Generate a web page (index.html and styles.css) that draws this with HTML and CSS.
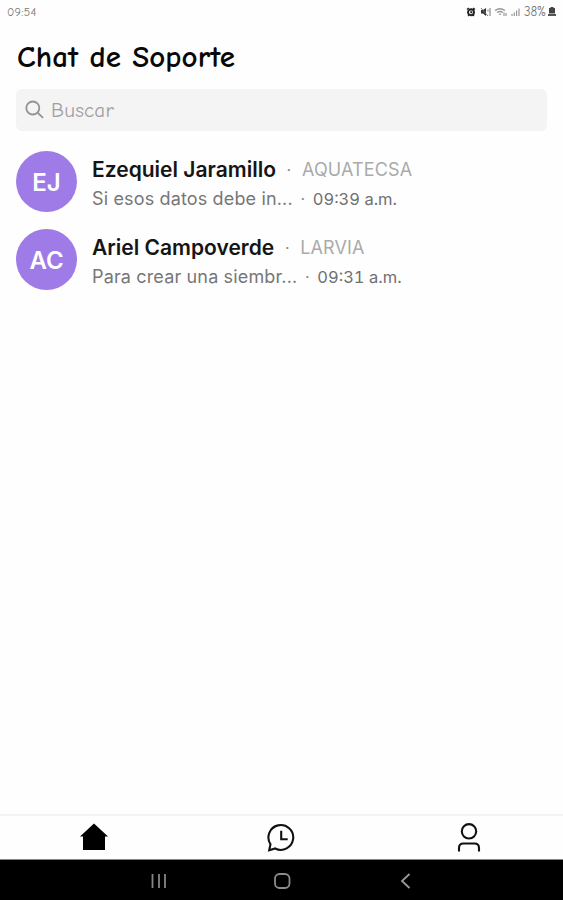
FILE: index.html
```html
<!DOCTYPE html>
<html lang="es">
<head>
    <meta charset="UTF-8">
    <meta name="viewport" content="width=device-width, initial-scale=1.0">
    <title>Chat de Soporte</title>
    <link rel="stylesheet" href="styles.css">
</head>
<body>

<!-- Barra de estado -->
<div class="status-bar">
    <span class="clock">09:54</span>
    <div class="status-icons">
        <svg width="10" height="10" viewBox="0 0 10 10"><circle cx="5" cy="5.2" r="3" fill="none" stroke="#222" stroke-width="1.9"/><path d="M1 2.4L2.8 1M9 2.4L7.2 1M2 9l1-1M8 9L7 8M5 3.5v2h1.3" stroke="#222" stroke-width="1.3" fill="none"/></svg>
        <svg class="mute" width="11" height="10" viewBox="0 0 11 10"><path d="M1 3h2L6 1v8L3 6.5H1z" fill="#333"/><path d="M1 1l7 8M8 2.5v2M10 1v8" stroke="#777" stroke-width="1" fill="none"/></svg>
        <svg class="wifi" width="13" height="10" viewBox="0 0 13 10"><path d="M1 3.5Q6 0 11 3.5M3 5.5q3-2 6 0M5 7.5q1-.8 2 0" stroke="#999" stroke-width="1.4" fill="none"/><path d="M10 5.5v3.5M12 6v3" stroke="#888" stroke-width="1"/></svg>
        <svg class="signal" width="9" height="10" viewBox="0 0 9 10"><path d="M1 7v2M3.3 5.5V9M5.6 3.5V9M8 1.5V9" stroke="#999" stroke-width="1.2"/></svg>
        <span class="percent">38%</span>
        <svg width="8" height="10" viewBox="0 0 8 10"><path d="M2.5 0h3v1H7v5.5H1V1h1.5z" fill="#444"/><path d="M0 7h8v2H0z" fill="#555"/></svg>
    </div>
</div>

<header>
    <h1>Chat de Soporte</h1>
    <div class="search">
        <svg width="20" height="20" viewBox="0 0 20 20" fill="none" stroke="#929292" stroke-width="1.8" stroke-linecap="round"><circle cx="7.8" cy="8" r="6.5"/><path d="M12.6 12.6L17.5 17.3"/></svg>
        <span>Buscar</span>
    </div>
</header>

<!-- Lista de chats -->
<main class="chats">
    <div class="chat">
        <div class="avatar">EJ</div>
        <div class="info">
            <div class="top"><span class="name">Ezequiel Jaramillo</span><span class="dot">·</span><span class="company">AQUATECSA</span></div>
            <div class="bottom"><span class="message">Si esos datos debe in...</span><span class="dot">·</span><span class="time">09:39 a.m.</span></div>
        </div>
    </div>
    <div class="chat">
        <div class="avatar">AC</div>
        <div class="info">
            <div class="top"><span class="name">Ariel Campoverde</span><span class="dot">·</span><span class="company">LARVIA</span></div>
            <div class="bottom"><span class="message">Para crear una siembr...</span><span class="dot">·</span><span class="time">09:31 a.m.</span></div>
        </div>
    </div>
</main>

<!-- Menu inferior -->
<nav class="tabs">
    <svg width="30" height="30" viewBox="0 0 30 30"><path d="M15 .5L29 13.5H26V27H4V13.5H1z" fill="#000"/></svg>
    <svg width="30" height="30" viewBox="0 0 30 30" fill="none" stroke="#111" stroke-width="2.1"><path d="M3.2 27.3L4.5 21.3A12.4 12.4 0 1 1 9.2 25.5Z"/><path d="M15.2 7.8V16.3H21.7"/></svg>
    <svg width="30" height="30" viewBox="0 0 30 30" fill="none" stroke="#111" stroke-width="2.1"><circle cx="15" cy="8.3" r="7.2"/><path d="M5 28.5V25Q5 20.5 9.5 20.5H20.5Q25 20.5 25 25V28.5"/></svg>
</nav>

<!-- Botones del sistema -->
<div class="system-bar">
    <svg width="18" height="18" viewBox="0 0 18 18"><path d="M2.5 2v14M9 2v14M15 2v14" stroke="#858585" stroke-width="1.8"/></svg>
    <svg width="18" height="18" viewBox="0 0 18 18"><rect x="2" y="2" width="14.5" height="14" rx="4.5" fill="none" stroke="#8c8c8c" stroke-width="1.8"/></svg>
    <svg width="18" height="18" viewBox="0 0 18 18"><path d="M13.5 2L6 9L13.5 16" fill="none" stroke="#999" stroke-width="1.8"/></svg>
</div>

</body>
</html>
```
FILE: styles.css
```css
* {
    box-sizing: border-box;
}
body {
    display: flex;
    flex-direction: column;
    height: 900px;
    margin: 0;
    background-color: #fefefe;
    font-family: Inter, sans-serif;
    overflow: hidden;
}
svg {
    display: block;
    flex: none;
}
.status-bar {
    display: flex;
    align-items: center;
    justify-content: space-between;
    height: 23px;
    padding: 0 7px;
    font-family: "Comic Neue", "Open Sans", sans-serif;
    color: #777;
}
.clock {
    font-size: 12px;
    letter-spacing: 0.3px;
}
.status-icons {
    display: flex;
    align-items: center;
}
.mute {
    margin-left: 4px;
}
.wifi {
    margin-left: 3px;
}
.signal {
    margin-left: 4px;
}
.percent {
    width: 24px;
    margin-left: 4px;
    font-size: 13px;
    letter-spacing: -0.2px;
}
header {
    padding: 0 16px;
}
h1 {
    height: 66px;
    margin: 0;
    padding-left: 1px;
    font-family: "Comic Neue", Lato, sans-serif;
    font-size: 31px;
    font-weight: 700;
    line-height: 69px;
    letter-spacing: 0.1px;
    white-space: nowrap;
    color: #080808;
}
.search {
    display: flex;
    align-items: center;
    height: 42px;
    padding-left: 9px;
    border-radius: 6px;
    background-color: #f4f4f4;
}
.search span {
    margin-left: 6px;
    font-family: "Comic Neue", Lato, sans-serif;
    font-size: 21px;
    letter-spacing: 0.2px;
    color: #a0a0a0;
}
.chats {
    flex: 1;
    padding: 20px 16px 0;
}
.chat {
    display: flex;
    align-items: center;
    height: 61px;
    margin-bottom: 17px;
}
.avatar {
    width: 61px;
    height: 61px;
    border-radius: 50%;
    background-color: #9f7be8;
    color: #fff;
    font-size: 24px;
    font-weight: 600;
    line-height: 63px;
    text-align: center;
}
.info {
    margin-left: 15px;
    white-space: nowrap;
}
.top, .bottom {
    display: flex;
    height: 30px;
}
.top {
    margin-top: 4px;
    line-height: 32px;
}
.bottom {
    line-height: 30px;
}
.name {
    font-size: 21px;
    font-weight: 600;
    color: #151515;
}
.dot {
    width: 26px;
    text-align: center;
    color: #888;
}
.company {
    font-size: 18px;
    letter-spacing: 0.15px;
    color: #aaa;
}
.message {
    font-size: 18px;
    letter-spacing: 0.15px;
    color: #777;
}
.bottom .dot {
    width: 20px;
}
.time {
    font-size: 16.5px;
    font-variant-numeric: tabular-nums;
    color: #707070;
}
.tabs {
    display: flex;
    justify-content: space-around;
    align-items: center;
    height: 45px;
    border-top: 2px solid #f3f3f3;
}
.system-bar {
    display: flex;
    justify-content: center;
    align-items: center;
    gap: 105px;
    height: 41px;
    padding-top: 1px;
    border-top: 1px solid #888;
    background-color: #000;
}
```
